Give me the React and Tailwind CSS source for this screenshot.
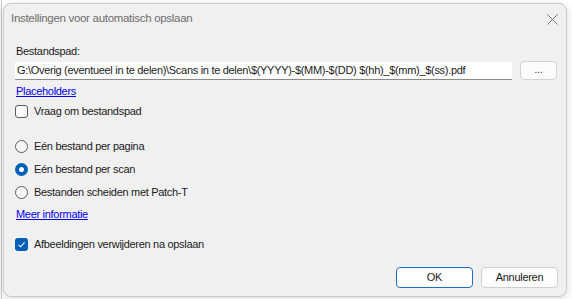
const FONT = { fontFamily: '"Segoe UI", "Liberation Sans", Arial, sans-serif' }

function Checkbox({ checked, label }) {
  return (
    <div className="flex items-center gap-[6px] h-[16px]">
      {checked ? (
        <span className="w-[13px] h-[13px] rounded-[3px] bg-[#005fb8] flex items-center justify-center">
          <svg width="9" height="9" viewBox="0 0 9 9">
            <path d="M1.5 4.8 L3.6 6.8 L7.6 2.4" fill="none" stroke="white" strokeWidth="1.1" />
          </svg>
        </span>
      ) : (
        <span className="w-[13px] h-[13px] rounded-[3px] border border-[#5d5d5d] bg-[#fbfbfb]" />
      )}
      <span>{label}</span>
    </div>
  )
}

function Radio({ checked, label }) {
  return (
    <div className="flex items-center gap-[6px] h-[16px]">
      {checked ? (
        <span className="w-[13px] h-[13px] rounded-full bg-[#005fb8] flex items-center justify-center">
          <span className="w-[5px] h-[5px] rounded-full bg-white" />
        </span>
      ) : (
        <span className="w-[13px] h-[13px] rounded-full border border-[#5d5d5d] bg-[#f7f7f7]" />
      )}
      <span>{label}</span>
    </div>
  )
}

export default function App() {
  return (
    <div className="w-[572px] h-[299px] bg-white overflow-hidden flex" style={FONT}>
      <div className="w-[2px] h-full border-r border-[#c8c8c8] bg-[#fafafa]" />
      <div className="mt-[3px] ml-[1px] w-[564px] h-[294px] shrink-0 rounded-[8px] border border-[#c9c9c9] bg-[#f0f0f0] text-[11px] tracking-[-0.3px] text-[#1b1b1b] flex flex-col shadow-[0_2px_8px_rgba(0,0,0,0.15)]">
        <div className="h-[30px] flex items-center justify-between pl-[7px] pr-[8px]">
          <span className="text-[11.5px] text-[#6e6e6e]">Instellingen voor automatisch opslaan</span>
          <svg width="11" height="11" viewBox="0 0 11 11">
            <path d="M0.5 0.5 L10.5 10.5 M10.5 0.5 L0.5 10.5" stroke="#707070" strokeWidth="1" />
          </svg>
        </div>
        <div className="pl-[11px] pr-[8px] flex flex-col">
          <div className="mt-[9px] h-[16px] leading-[16px] pl-[1px]">Bestandspad:</div>
          <div className="mt-[2px] flex items-center gap-[8px]">
            <div className="w-[497px] h-[18px] bg-white border-b border-[#8a8a8a] leading-[17px] pl-[2px] whitespace-nowrap overflow-hidden">
              G:\Overig (eventueel in te delen)\Scans in te delen\$(YYYY)-$(MM)-$(DD) $(hh)_$(mm)_$(ss).pdf
            </div>
            <div className="w-[37px] h-[19px] rounded-[4px] border border-[#d3d3d3] bg-[#fbfbfb] flex items-center justify-center text-[11px] text-[#444] leading-none pb-[3px]">
              ...
            </div>
          </div>
          <div className="mt-[3px] h-[16px] leading-[16px] pl-[1px]">
            <span className="text-[#0000e6] underline">Placeholders</span>
          </div>
          <div className="mt-[4px]">
            <Checkbox label="Vraag om bestandspad" />
          </div>
          <div className="mt-[19px] flex flex-col gap-[7px]">
            <Radio label="Eén bestand per pagina" />
            <Radio checked label="Eén bestand per scan" />
            <Radio label="Bestanden scheiden met Patch-T" />
          </div>
          <div className="mt-[6px] h-[16px] leading-[16px] pl-[1px]">
            <span className="text-[#0000e6] underline">Meer informatie</span>
          </div>
          <div className="mt-[14px]">
            <Checkbox checked label="Afbeeldingen verwijderen na opslaan" />
          </div>
          <div className="mt-[15px] flex justify-end gap-[8px]">
            <div className="w-[77px] h-[21px] rounded-[4px] border border-[#1f6fc0] bg-white flex items-center justify-center">OK</div>
            <div className="w-[77px] h-[21px] rounded-[4px] border border-[#d0d0d0] bg-[#fdfdfd] flex items-center justify-center">Annuleren</div>
          </div>
        </div>
      </div>
    </div>
  )
}
